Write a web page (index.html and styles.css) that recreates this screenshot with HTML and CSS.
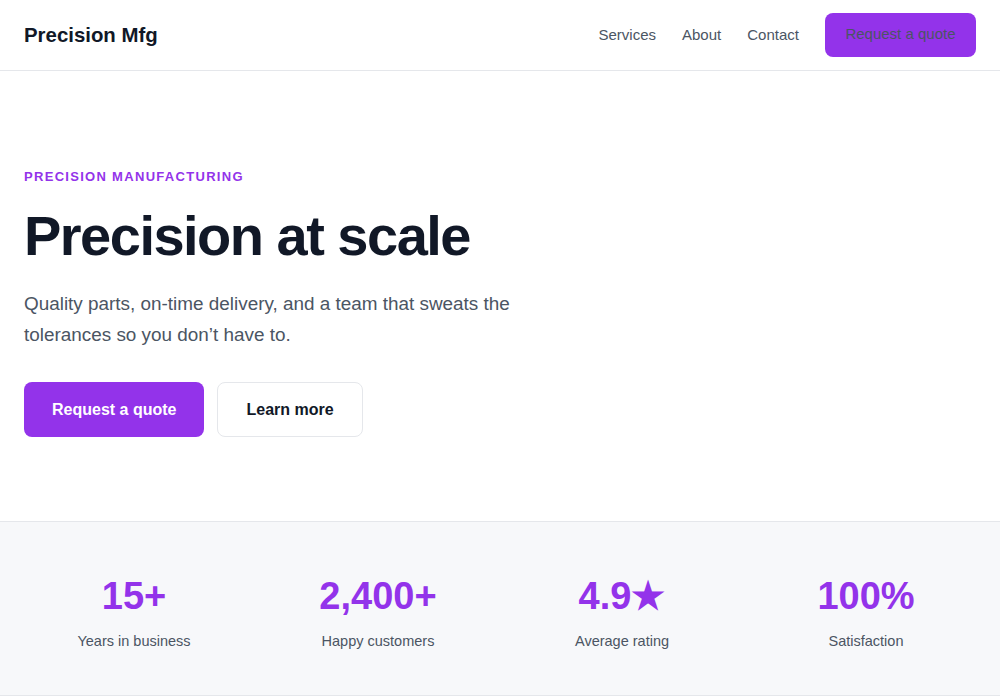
FILE: index.html
```html
<!DOCTYPE html>
<html lang="en">
<head>
    <meta charset="UTF-8">
    <meta name="viewport" content="width=device-width, initial-scale=1.0">
    <title>Precision Mfg</title>
    <link rel="stylesheet" href="styles.css">
</head>
<body>

    <header class="site-header">
        <a href="#" class="logo">Precision Mfg</a>
        <nav class="nav">
            <a href="#services">Services</a>
            <a href="#about">About</a>
            <a href="#contact">Contact</a>
            <a href="#quote" class="nav-cta">Request a quote</a>
        </nav>
    </header>

    <section class="hero">
        <p class="eyebrow">Precision manufacturing</p>
        <h1>Precision at scale</h1>
        <p class="lead">Quality parts, on-time delivery, and a team that sweats the tolerances so you don’t have to.</p>
        <div class="actions">
            <a href="#quote" class="btn btn-primary">Request a quote</a>
            <a href="#about" class="btn btn-secondary">Learn more</a>
        </div>
    </section>

    <section class="stats">
        <div class="stat">
            <div class="stat-value">15+</div>
            <div class="stat-label">Years in business</div>
        </div>
        <div class="stat">
            <div class="stat-value">2,400+</div>
            <div class="stat-label">Happy customers</div>
        </div>
        <div class="stat">
            <div class="stat-value">4.9★</div>
            <div class="stat-label">Average rating</div>
        </div>
        <div class="stat">
            <div class="stat-value">100%</div>
            <div class="stat-label">Satisfaction</div>
        </div>
    </section>

</body>
</html>
```

FILE: styles.css
```css
* {
    box-sizing: border-box;
}
body {
    margin: 0;
    font-family: "Liberation Sans", Arial, sans-serif;
    color: #111827;
    background: #fff;
}
a {
    text-decoration: none;
}

/* En-tête */
.site-header {
    display: flex;
    align-items: center;
    justify-content: space-between;
    padding: 13px 24px;
    border-bottom: 1px solid #e5e7eb;
}
.logo {
    font-size: 20.4px;
    line-height: 22px;
    font-weight: bold;
    color: #111827;
}
.nav {
    display: flex;
    align-items: center;
    gap: 26px;
}
.nav a {
    font-size: 15px;
    line-height: 18px;
    color: #4b5563;
}
.nav .nav-cta {
    background: #9333ea;
    padding: 12px 20.5px 14px;
    border-radius: 8px;
}

/* Hero */
.hero {
    padding: 98px 24px 84px;
}
.eyebrow {
    margin: 0 0 20px;
    font-size: 13px;
    line-height: 16px;
    font-weight: bold;
    letter-spacing: 0.1em;
    text-transform: uppercase;
    color: #9333ea;
}
h1 {
    margin: 0 0 21px;
    font-size: 56px;
    line-height: 1.1;
    letter-spacing: -0.027em;
    color: #111827;
}
.lead {
    margin: 0 0 32px;
    max-width: 540px;
    font-size: 18.9px;
    line-height: 31px;
    color: #4b5563;
}
.actions {
    display: flex;
    gap: 13px;
}
.btn {
    display: inline-block;
    padding: 17px 27px;
    line-height: 19px;
    font-size: 16px;
    font-weight: bold;
    border-radius: 8px;
    border: 1px solid transparent;
}
.btn-primary {
    background: #9333ea;
    color: #fff;
}
.btn-secondary {
    padding: 17px 28px;
    background: #fff;
    color: #111827;
    border-color: #e5e7eb;
}

/* Chiffres clés */
.stats {
    display: grid;
    grid-template-columns: repeat(4, 1fr);
    gap: 24px;
    padding: 54px 24px 44px;
    background: #f7f8fa;
    border-top: 1px solid #e5e7eb;
    border-bottom: 1px solid #e5e7eb;
    text-align: center;
}
.stat-value {
    font-size: 38px;
    line-height: 1.1;
    font-weight: bold;
    color: #9333ea;
}
.stat-label {
    margin-top: 14px;
    font-size: 14.5px;
    line-height: 20px;
    color: #4b5563;
}
```
